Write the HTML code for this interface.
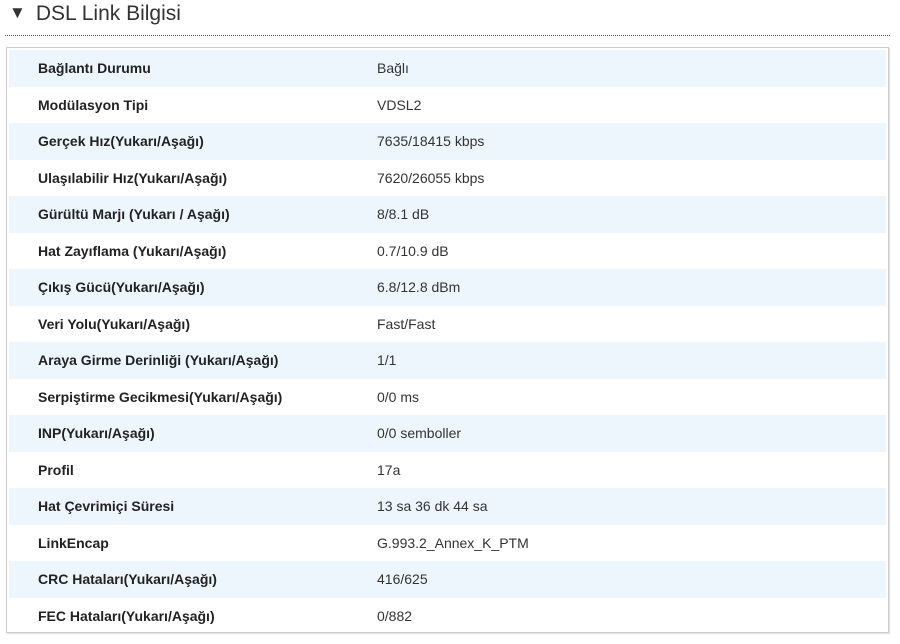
<!DOCTYPE html>
<html><head><meta charset="utf-8"><style>
body{margin:0;background:#fff;width:900px;height:644px;overflow:hidden;font-family:"Liberation Sans",sans-serif;color:#333}
.title{position:absolute;left:9px;top:2px;font-size:21px;color:#333}
.title .tri{font-size:17px;position:relative;top:-2px;margin-right:10px}
.line{position:absolute;left:5px;top:35px;width:885px;border-top:1px dotted #555}
.box{position:absolute;left:6px;top:47px;width:883px;height:586px;border:1px solid #ccc;box-shadow:1px 1px 1px #ddd;padding:2px 2px 0 2px;box-sizing:border-box}
.row{height:36.5px;line-height:36.5px;font-size:14px;position:relative}
.row:nth-child(odd){background:#eef6fd}
.l{position:absolute;left:29px;font-weight:bold;color:#222}
.v{position:absolute;left:368px;color:#333}
</style></head><body>
<div class="title"><span class="tri">▼</span>DSL Link Bilgisi</div>
<div class="line"></div>
<div class="box">
<div class="row"><span class="l">Bağlantı Durumu</span><span class="v">Bağlı</span></div>
<div class="row"><span class="l">Modülasyon Tipi</span><span class="v">VDSL2</span></div>
<div class="row"><span class="l">Gerçek Hız(Yukarı/Aşağı)</span><span class="v">7635/18415 kbps</span></div>
<div class="row"><span class="l">Ulaşılabilir Hız(Yukarı/Aşağı)</span><span class="v">7620/26055 kbps</span></div>
<div class="row"><span class="l">Gürültü Marjı (Yukarı / Aşağı)</span><span class="v">8/8.1 dB</span></div>
<div class="row"><span class="l">Hat Zayıflama (Yukarı/Aşağı)</span><span class="v">0.7/10.9 dB</span></div>
<div class="row"><span class="l">Çıkış Gücü(Yukarı/Aşağı)</span><span class="v">6.8/12.8 dBm</span></div>
<div class="row"><span class="l">Veri Yolu(Yukarı/Aşağı)</span><span class="v">Fast/Fast</span></div>
<div class="row"><span class="l">Araya Girme Derinliği (Yukarı/Aşağı)</span><span class="v">1/1</span></div>
<div class="row"><span class="l">Serpiştirme Gecikmesi(Yukarı/Aşağı)</span><span class="v">0/0 ms</span></div>
<div class="row"><span class="l">INP(Yukarı/Aşağı)</span><span class="v">0/0 semboller</span></div>
<div class="row"><span class="l">Profil</span><span class="v">17a</span></div>
<div class="row"><span class="l">Hat Çevrimiçi Süresi</span><span class="v">13 sa 36 dk 44 sa</span></div>
<div class="row"><span class="l">LinkEncap</span><span class="v">G.993.2_Annex_K_PTM</span></div>
<div class="row"><span class="l">CRC Hataları(Yukarı/Aşağı)</span><span class="v">416/625</span></div>
<div class="row"><span class="l">FEC Hataları(Yukarı/Aşağı)</span><span class="v">0/882</span></div>
</div>
</body></html>
